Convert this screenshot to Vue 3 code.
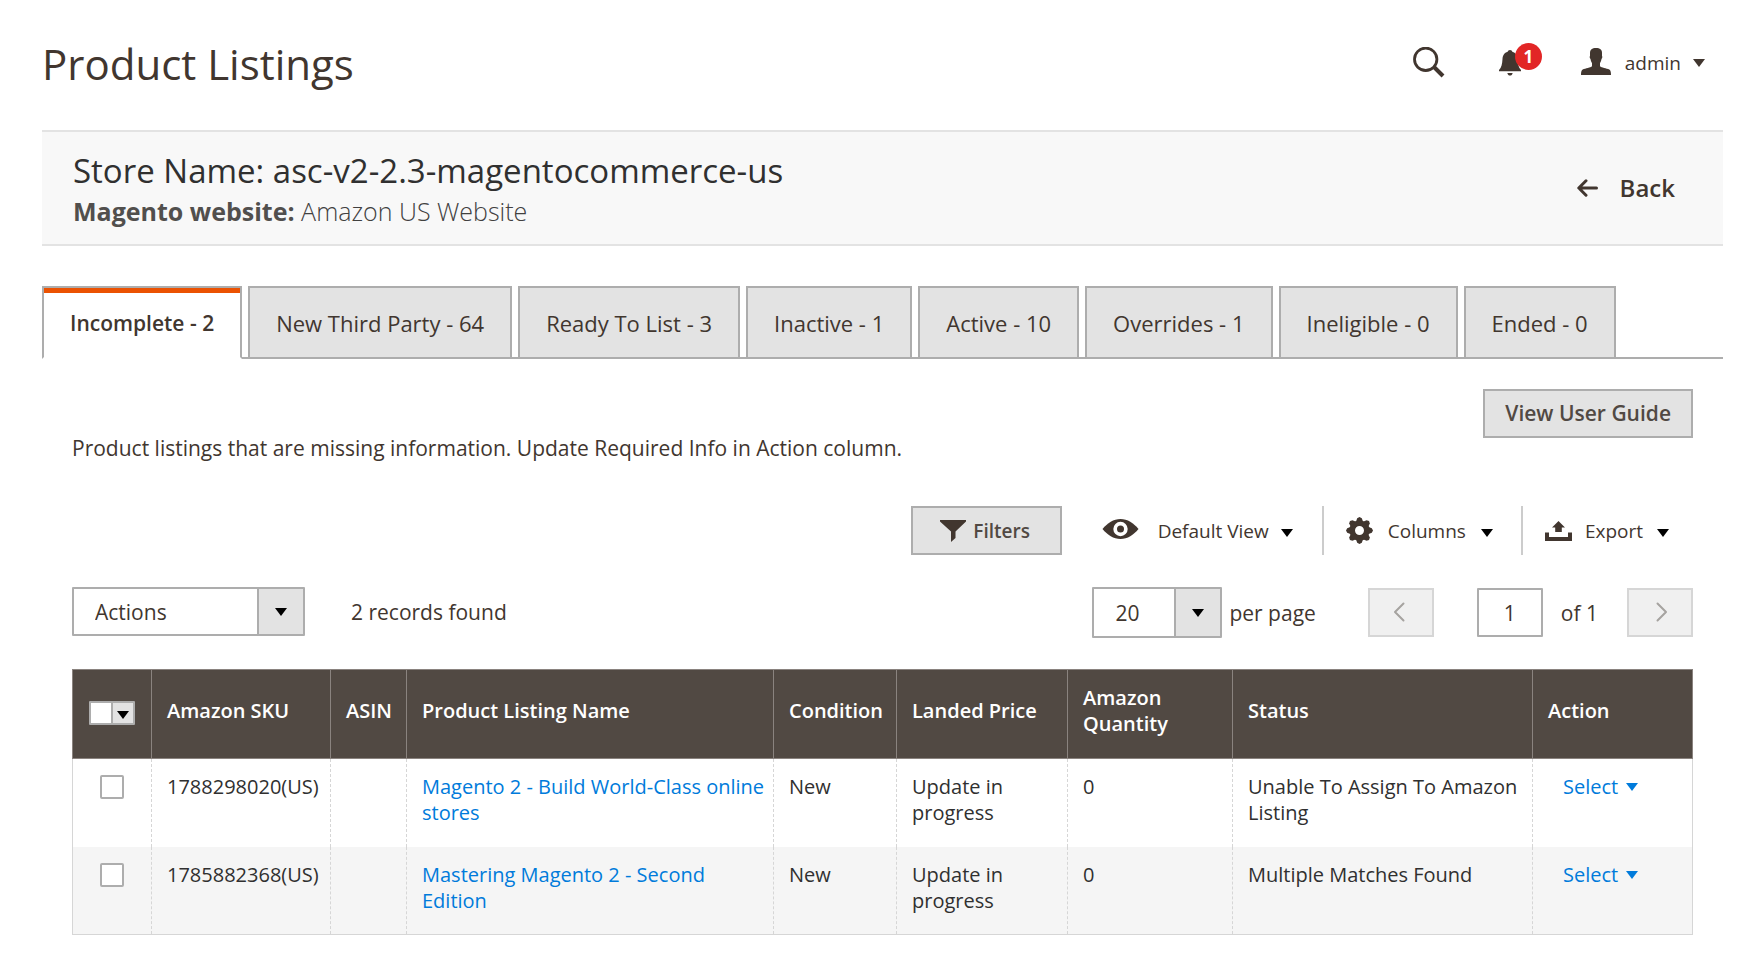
<script setup>
import { ref } from 'vue'

const tabs = [
  { name: 'Incomplete', count: 2 },
  { name: 'New Third Party', count: 64 },
  { name: 'Ready To List', count: 3 },
  { name: 'Inactive', count: 1 },
  { name: 'Active', count: 10 },
  { name: 'Overrides', count: 1 },
  { name: 'Ineligible', count: 0 },
  { name: 'Ended', count: 0 },
]
const activeTab = ref('Incomplete')

const columns = [
  { label: 'Amazon SKU', cls: 'col-sku' },
  { label: 'ASIN', cls: 'col-asin' },
  { label: 'Product Listing Name', cls: 'col-name' },
  { label: 'Condition', cls: 'col-condition' },
  { label: 'Landed Price', cls: 'col-price' },
  { label: 'Amazon Quantity', cls: 'col-qty' },
  { label: 'Status', cls: 'col-status' },
  { label: 'Action', cls: 'col-action' },
]

const rows = [
  {
    sku: '1788298020(US)',
    asin: '',
    name: 'Magento 2 - Build World-Class online stores',
    condition: 'New',
    price: 'Update in progress',
    quantity: 0,
    status: 'Unable To Assign To Amazon Listing',
  },
  {
    sku: '1785882368(US)',
    asin: '',
    name: 'Mastering Magento 2 - Second Edition',
    condition: 'New',
    price: 'Update in progress',
    quantity: 0,
    status: 'Multiple Matches Found',
  },
]
const selected = ref([])
const page = ref('1')
</script>

<template>
  <div class="page">
    <header class="page-header">
      <h1>Product Listings</h1>
      <div class="header-tools">
        <button class="plain search" type="button" aria-label="Search">
          <svg width="32" height="32" viewBox="0 0 32 32" fill="none" stroke="#41362f">
            <circle cx="12.7" cy="12.3" r="11.200" stroke-width="2.800" />
            <path d="M20.5 19.5 30 29" stroke-width="4" />
          </svg>
        </button>
        <button class="plain bell" type="button" aria-label="Notifications">
          <svg width="22" height="26" viewBox="0 0 22 26" fill="#41362f">
            <path d="M11 0c1.300 0 2 .8 2.300 1.800 3.500 1 5 4 5.200 7.200.3 5 1 8.500 3.500 11v1.200H0V20c2.500-2.500 3.200-6 3.500-11C3.700 5.800 5.200 2.800 8.700 1.800 9 .8 9.700 0 11 0z" />
            <path d="M8.300 23h5.400c-.4 1.600-1.400 2.600-2.700 2.600S8.700 24.600 8.300 23z" />
          </svg>
          <span class="badge">1</span>
        </button>
        <button class="plain user" type="button">
          <svg width="30" height="27" viewBox="0 0 30 27" fill="#41362f">
            <path d="M15 0c4 0 6 1.500 6 5v3c.6.3.3 2.500-.5 2.900-.3 1.800-.8 3.100-1.500 4.200v3.200c1.400 1.400 6.500 2 9.300 3.200 1.300.7 1.700 2.500 1.700 5.500H0c0-3 .4-4.800 1.700-5.500 2.800-1.200 7.900-1.800 9.300-3.200v-3.200c-.7-1.100-1.200-2.400-1.500-4.200C8.700 10.500 8.400 8.300 9 8V5c0-3.500 2-5 6-5z" />
          </svg>
          <span class="user-name">admin</span>
          <svg class="caret" width="12" height="8" viewBox="0 0 12 8" fill="#41362f"><path d="M0 0h12L6 8z" /></svg>
        </button>
      </div>
    </header>

    <section class="banner">
      <div>
        <h2>Store Name: asc-v2-2.3-magentocommerce-us</h2>
        <p><strong>Magento website:</strong> Amazon US Website</p>
      </div>
      <a class="back" href="#">
        <svg width="21" height="18" viewBox="0 0 21 18" fill="none" stroke="#41362f" stroke-width="3" stroke-linecap="round" stroke-linejoin="round">
          <path d="M19.500 9H2M9 1.800 1.800 9 9 16.200" />
        </svg>
        Back
      </a>
    </section>

    <nav class="tabs">
      <button
        v-for="tab in tabs"
        :key="tab.name"
        type="button"
        :class="['tab', { active: tab.name === activeTab }]"
        @click="activeTab = tab.name"
      >{{ tab.name }} - {{ tab.count }}</button>
    </nav>

    <main class="content">
      <div class="intro">
        <p>Product listings that are missing information. Update Required Info in Action column.</p>
        <button class="btn guide" type="button">View User Guide</button>
      </div>

      <div class="toolbar">
        <button class="btn filters" type="button">
          <svg width="26" height="22" viewBox="0 0 26 22" fill="#41362f"><path d="M0 0h26v1.500l-10.500 10V18L11 22V11.500L0 1.500z" /></svg>
          Filters
        </button>
        <button class="plain tool view" type="button">
          <svg class="eye" width="37" height="20" viewBox="0 0 36 20">
            <path fill="#41362f" d="M0 10C5 4 11 0 18 0s13 4 18 10c-5 6-11 10-18 10S5 16 0 10z" />
            <circle cx="18" cy="10" r="7.200" fill="#fff" />
            <circle cx="18" cy="10" r="3.500" fill="#41362f" />
          </svg>
          <span>Default View</span>
          <svg class="caret" width="12" height="8" viewBox="0 0 12 8"><path d="M0 0h12L6 8z" /></svg>
        </button>
        <button class="plain tool ruled columns" type="button">
          <svg width="27" height="27" viewBox="0 0 27 27" fill="#41362f">
            <path v-for="n in 8" :key="n" :transform="`rotate(${n * 45} 13.500 13.500)`" d="M9.800 5 11.200 1.200 13.500 0l2.300 1.200L17.200 5z" />
            <path fill-rule="evenodd" d="M13.500 3.400a10.100 10.100 0 1 1 0 20.200 10.100 10.100 0 0 1 0-20.200zm0 5.600a4.500 4.500 0 1 0 0 9 4.500 4.500 0 0 0 0-9z" />
          </svg>
          <span>Columns</span>
          <svg class="caret" width="12" height="8" viewBox="0 0 12 8"><path d="M0 0h12L6 8z" /></svg>
        </button>
        <button class="plain tool ruled export" type="button">
          <svg width="27" height="20" viewBox="0 0 27 20" fill="#41362f">
            <path d="M13.500 0 20 6.500h-3.200V11h-6.600V6.500H7z" />
            <path d="M0 11.500h4V16h19v-4.500h4V20H0z" />
          </svg>
          <span>Export</span>
          <svg class="caret" width="12" height="8" viewBox="0 0 12 8"><path d="M0 0h12L6 8z" /></svg>
        </button>
      </div>

      <div class="controls">
        <div class="dropdown actions">
          <select aria-label="Actions">
            <option>Actions</option>
          </select>
          <span class="dropdown-arrow">
            <svg width="12" height="8" viewBox="0 0 12 8"><path d="M0 0h12L6 8z" /></svg>
          </span>
        </div>
        <span class="records">2 records found</span>

        <div class="pager">
          <div class="dropdown per-page">
            <select id="page-size">
              <option>20</option>
            </select>
            <span class="dropdown-arrow">
              <svg width="12" height="8" viewBox="0 0 12 8"><path d="M0 0h12L6 8z" /></svg>
            </span>
          </div>
          <label class="per-page-label" for="page-size">per page</label>
          <button class="step" type="button" disabled aria-label="Previous page">
            <svg width="16" height="20" viewBox="0 0 16 20"><path d="M10.500 1.500 2 10l8.500 8.500" /></svg>
          </button>
          <input id="page-number" v-model="page" class="page-number" type="text" />
          <label class="page-total" for="page-number">of 1</label>
          <button class="step" type="button" disabled aria-label="Next page">
            <svg width="16" height="20" viewBox="0 0 16 20"><path d="M5.500 1.500 14 10l-8.500 8.500" /></svg>
          </button>
        </div>
      </div>

      <table>
        <thead>
          <tr>
            <th class="col-check">
              <div class="multicheck">
                <input type="checkbox" aria-label="Select all" />
                <button type="button" aria-label="Selection options">
                  <svg width="12" height="8" viewBox="0 0 12 8"><path d="M0 0h12L6 8z" /></svg>
                </button>
              </div>
            </th>
            <th v-for="col in columns" :key="col.label" :class="col.cls">{{ col.label }}</th>
          </tr>
        </thead>
        <tbody>
          <tr v-for="row in rows" :key="row.sku">
            <td class="check-cell">
              <input v-model="selected" class="box" type="checkbox" :value="row.sku" :aria-label="row.sku" />
            </td>
            <td>{{ row.sku }}</td>
            <td>{{ row.asin }}</td>
            <td><a href="#">{{ row.name }}</a></td>
            <td>{{ row.condition }}</td>
            <td>{{ row.price }}</td>
            <td>{{ row.quantity }}</td>
            <td>{{ row.status }}</td>
            <td>
              <button class="plain select-action" type="button">
                Select
                <svg width="12" height="8" viewBox="0 0 12 8" fill="#007bdb"><path d="M0 0h12L6 8z" /></svg>
              </button>
            </td>
          </tr>
        </tbody>
      </table>
    </main>
  </div>
</template>

<style>
body {
  background: #fff;
}
</style>

<style scoped>
.page {
  padding: 0 41px 22px 42px;
  font-family: "Open Sans", "Noto Sans", sans-serif;
  font-size: 21px;
  line-height: 28px;
  color: #41362f;
}

.page *,
.page *::before {
  box-sizing: border-box;
}

button,
input,
select {
  margin: 0;
  font: inherit;
  color: inherit;
}

button {
  cursor: pointer;
}

svg {
  display: block;
  flex: none;
}

h1,
h2,
p {
  margin: 0;
}

.plain {
  display: flex;
  align-items: center;
  padding: 0;
  border: 0;
  background: none;
}

/* Header */
.page-header {
  display: flex;
  justify-content: space-between;
  align-items: center;
  height: 130px;
  padding-bottom: 2px;
}

h1 {
  font-size: 42px;
  font-weight: 400;
  line-height: 58px;
}

.header-tools {
  display: flex;
  align-items: center;
  margin: 0 18px 2px 0;
}

.bell {
  position: relative;
  margin-left: 54px;
}

.badge {
  position: absolute;
  top: -7px;
  left: 16px;
  width: 27px;
  height: 27px;
  border-radius: 50%;
  background: #e22626;
  color: #fff;
  font-size: 17px;
  font-weight: 700;
  line-height: 27px;
  text-align: center;
}

.user {
  margin-left: 60px;
}

.user svg:first-child {
  margin-bottom: 4px;
}

.user-name {
  margin: 0 12px 0 14px;
  font-size: 19px;
}

/* Store banner */
.banner {
  display: flex;
  justify-content: space-between;
  align-items: center;
  padding: 16px 48px 16px 31px;
  border-top: 2px solid #e3e3e3;
  border-bottom: 2px solid #e3e3e3;
  background: #f8f8f8;
}

h2 {
  font-size: 33px;
  font-weight: 400;
  line-height: 46px;
  color: #303030;
}

.banner p {
  font-size: 25px;
  font-weight: 300;
  line-height: 34px;
  color: #41403f;
}

.banner strong {
  font-weight: 700;
  color: #514f4d;
}

.back {
  display: flex;
  align-items: center;
  gap: 22px;
  color: #41362f;
  font-size: 24px;
  font-weight: 600;
  text-decoration: none;
}

/* Tabs */
.tabs {
  display: flex;
  gap: 6px;
  margin-top: 40px;
  box-shadow: inset 0 -2px #adadad;
}

.tab {
  height: 73px;
  padding: 0 26px;
  border: 2px solid #adadad;
  background: #e3e3e3;
  font-size: 22px;
  white-space: nowrap;
}

.tab.active {
  border-bottom-color: #fff;
  background: #fff;
  box-shadow: inset 0 5px #eb5202;
  font-size: 21px;
  font-weight: 600;
}

/* Content */
.content {
  padding: 30px 30px 0;
}

.intro {
  display: flex;
  justify-content: space-between;
  align-items: flex-start;
}

.intro p {
  padding-top: 45px;
}

.btn {
  display: flex;
  align-items: center;
  justify-content: center;
  height: 49px;
  border: 2px solid #adadad;
  background: #e3e3e3;
  color: #514943;
  font-weight: 600;
}

.guide {
  padding: 0 20px 2px;
}

.toolbar {
  display: flex;
  justify-content: flex-end;
  align-items: center;
  margin-top: 44px;
}

.filters {
  gap: 7px;
  width: 151px;
  padding: 0 6px 0 4px;
  font-size: 19px;
}

.tool {
  height: 49px;
  padding: 0 24px 0 22px;
  font-size: 19px;
}

.tool span {
  margin: 0 15px;
}

.tool .caret {
  margin-top: 4px;
}

.tool.view {
  padding: 0 29px 0 40px;
}

.eye {
  margin-bottom: 4px;
}

.tool.view span {
  margin: 0 12px 0 19px;
}

.ruled {
  border-left: 2px solid #ccc;
}

.tool.columns {
  padding-right: 28px;
}

.tool.export span {
  margin: 0 14px 0 13px;
}

.controls {
  display: flex;
  align-items: flex-start;
  margin-top: 32px;
}

.dropdown {
  position: relative;
}

.dropdown select {
  display: block;
  width: 100%;
  height: 49px;
  padding: 0 48px 0 21px;
  border: 2px solid #adadad;
  border-radius: 1px;
  appearance: none;
  background: #fff;
}

.dropdown-arrow {
  position: absolute;
  inset: 2px 2px 2px auto;
  display: flex;
  align-items: center;
  justify-content: center;
  width: 46px;
  border-left: 2px solid #adadad;
  background: #e3e3e3;
  pointer-events: none;
}

.actions {
  width: 233px;
}

.records {
  margin-left: 46px;
  line-height: 50px;
}

.pager {
  display: flex;
  align-items: center;
  margin-left: auto;
}

.per-page {
  width: 130px;
}

.per-page select {
  height: 51px;
}

.per-page-label {
  margin: 0 52px 0 7px;
}

.step {
  display: flex;
  align-items: center;
  justify-content: center;
  width: 66px;
  height: 49px;
  padding: 0 0 2px;
  border: 2px solid #d6d6d6;
  background: #f0f0f0;
}

.step path {
  fill: none;
  stroke: #a6a3a0;
  stroke-width: 2;
  stroke-linecap: round;
  stroke-linejoin: round;
}

.page-number {
  width: 66px;
  height: 49px;
  margin-left: 43px;
  padding: 0;
  border: 2px solid #adadad;
  border-radius: 1px;
  text-align: center;
}

.page-total {
  margin: 0 29px 0 18px;
}

/* Grid */
table {
  width: 100%;
  margin-top: 31px;
  border-collapse: collapse;
  table-layout: fixed;
  font-size: 20px;
  line-height: 26px;
  color: #303030;
}

th {
  height: 89px;
  padding: 0 6px 6px 15px;
  border: 1px solid #8a837f;
  background: #514943;
  color: #fff;
  font-weight: 600;
  text-align: left;
  vertical-align: middle;
}

td {
  height: 88px;
  padding: 15px 6px 0 15px;
  border-left: 1px dashed #d6d6d6;
  border-right: 1px dashed #d6d6d6;
  vertical-align: top;
}

td:first-child {
  border-left: 1px solid #d6d6d6;
}

td:last-child {
  border-right: 1px solid #d6d6d6;
}

tbody tr:last-child td {
  border-bottom: 1px solid #d6d6d6;
}

tbody tr:nth-child(even) {
  background: #f5f5f5;
}

td a {
  color: #007bdb;
  text-decoration: none;
}

.col-check { width: 79px; padding-left: 16px; }
.col-sku { width: 179px; }
.col-asin { width: 76px; }
.col-name { width: 367px; }
.col-condition { width: 123px; }
.col-price { width: 171px; }
.col-qty { width: 165px; }
.col-status { width: 300px; }

.multicheck {
  display: flex;
  width: 46px;
  height: 24px;
  margin-top: 4px;
  border: 2px solid #adadad;
  border-radius: 1px;
  background: #fff;
}

.multicheck input {
  width: 20px;
  height: 20px;
  appearance: none;
}

.multicheck button {
  display: flex;
  flex: 1;
  align-items: center;
  justify-content: center;
  padding: 3px 0 0;
  border: 0;
  border-left: 2px solid #adadad;
  background: #e3e3e3;
}

.check-cell {
  padding: 16px 0 0;
}

.box {
  display: block;
  width: 24px;
  height: 24px;
  margin: 0 auto;
  border: 2px solid #adadad;
  border-radius: 2px;
  appearance: none;
  background: #fff;
}

.box:checked {
  background: #514943;
  box-shadow: inset 0 0 0 4px #fff;
}

.select-action {
  gap: 8px;
  margin-left: 15px;
  color: #007bdb;
}
</style>
